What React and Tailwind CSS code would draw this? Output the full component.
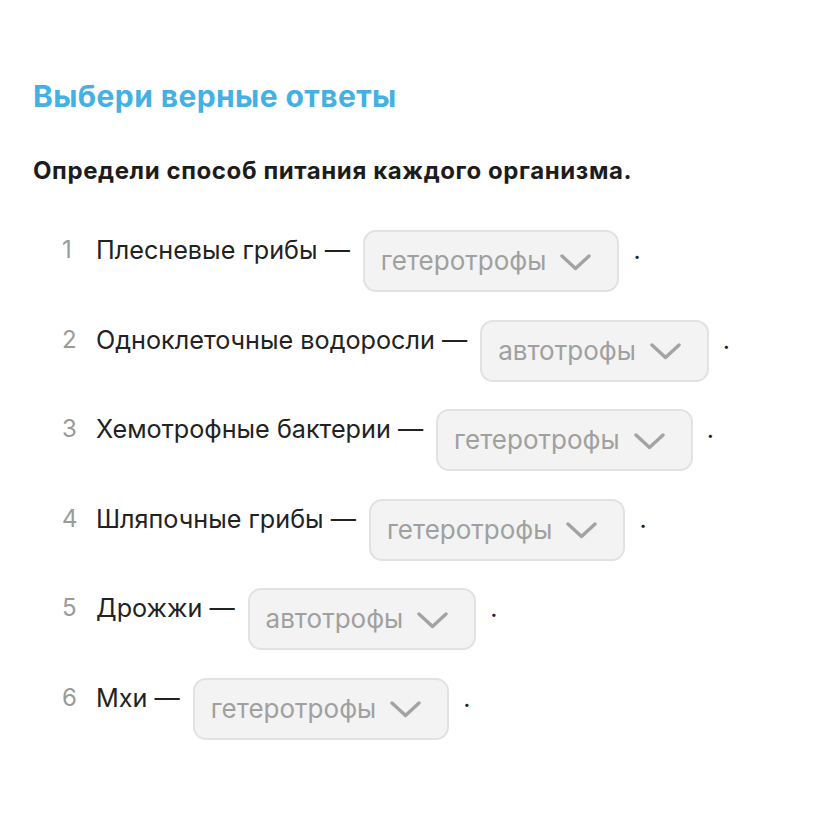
// rows of the task: organism and chosen answer
const rows = [
  { n: 1, label: "Плесневые грибы", answer: "гетеротрофы" },
  { n: 2, label: "Одноклеточные водоросли", answer: "автотрофы" },
  { n: 3, label: "Хемотрофные бактерии", answer: "гетеротрофы" },
  { n: 4, label: "Шляпочные грибы", answer: "гетеротрофы" },
  { n: 5, label: "Дрожжи", answer: "автотрофы" },
  { n: 6, label: "Мхи", answer: "гетеротрофы" },
];

function Select({ value }) {
  return (
    <div className="flex h-[62px] items-center gap-[14px] rounded-[13px] border-2 border-[#e2e2e2] bg-[#f3f3f3] pl-[16px] pr-[26px]">
      <span className="text-[26px] leading-[30px] text-[#a0a0a0]">{value}</span>
      <svg width="31" height="17" viewBox="0 0 31 17" fill="none" className="mt-[2px]">
        <path d="M2 2L15.5 14.5L29 2" stroke="#a3a3a3" strokeWidth="3.4" strokeLinecap="round" strokeLinejoin="round" />
      </svg>
    </div>
  );
}

export default function App() {
  return (
    <div className="min-h-[824px] bg-white pl-[33px] pt-[78px]" style={{ fontFamily: "Inter, 'Noto Sans', sans-serif" }}>
      {/* Heading */}
      <h1 className="text-[30px] font-bold leading-[36px] tracking-[0.4px] text-[#45b0e3]">Выбери верные ответы</h1>
      <p className="mt-[42px] text-[24px] font-bold leading-[30px] tracking-[0.6px] text-[#1c1c1c]">
        Определи способ питания каждого организма.
      </p>

      {/* Rows */}
      <div className="mt-[44px] flex flex-col gap-[27.5px] pl-[29px]">
        {rows.map((row) => (
          <div key={row.n} className="flex items-start">
            <span className="mt-[5px] w-[34px] text-[24px] leading-[30px] text-[#9a9a9a]">{row.n}</span>
            <span className="mt-[5px] text-[25.2px] leading-[30px] text-[#222]">{row.label} —</span>
            <div className="ml-[13px]">
              <Select value={row.answer} />
            </div>
            <span className="ml-[14px] mt-[5px] text-[25px] leading-[30px] text-[#222]">.</span>
          </div>
        ))}
      </div>
    </div>
  );
}
